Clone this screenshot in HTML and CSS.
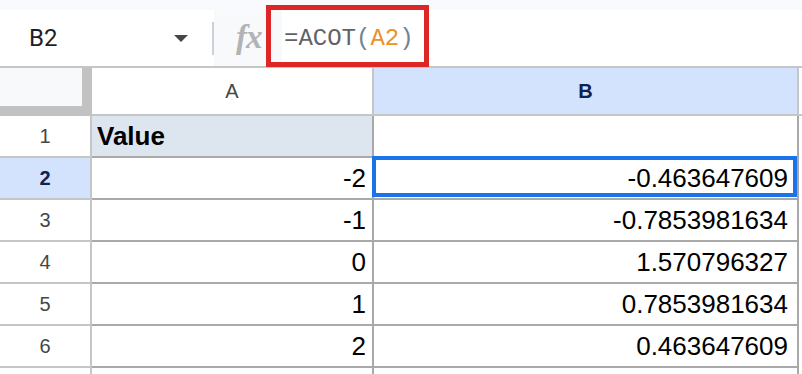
FILE: index.html
```html
<!DOCTYPE html>
<html>
<head>
<meta charset="utf-8">
<link rel="stylesheet" href="styles.css">
</head>
<body>
<div class="page">
  <div class="top-strip"></div>
  <div class="toolbar">
    <div class="namebox">
      <span class="namebox-text">B2</span>
      <span class="caret"></span>
    </div>
    <div class="sep"></div>
    <div class="fx-area"><span class="fx">fx</span></div>
    <div class="formula"><span class="f-fn">=ACOT</span><span class="f-par">(</span><span class="f-ref">A2</span><span class="f-par">)</span></div>
  </div>
  <div class="highlight"></div>
  <div class="grid">
    <div class="corner"><div class="corner-inner"></div></div>
    <div class="colhead">A</div>
    <div class="colhead sel">B</div>
    <div class="colhead rest"></div>

    <div class="rowhead">1</div>
    <div class="cell a head">Value</div>
    <div class="cell b"></div>
    <div class="rest-cell"></div>

    <div class="rowhead sel">2</div>
    <div class="cell a">-2</div>
    <div class="cell b active">-0.463647609</div>
    <div class="rest-cell"></div>

    <div class="rowhead">3</div>
    <div class="cell a">-1</div>
    <div class="cell b">-0.7853981634</div>
    <div class="rest-cell"></div>

    <div class="rowhead">4</div>
    <div class="cell a">0</div>
    <div class="cell b">1.570796327</div>
    <div class="rest-cell"></div>

    <div class="rowhead">5</div>
    <div class="cell a">1</div>
    <div class="cell b">0.7853981634</div>
    <div class="rest-cell"></div>

    <div class="rowhead">6</div>
    <div class="cell a">2</div>
    <div class="cell b">0.463647609</div>
    <div class="rest-cell"></div>

    <div class="rowhead last"></div>
    <div class="cell a last"></div>
    <div class="cell b last"></div>
    <div class="rest-cell"></div>
  </div>
</div>
</body>
</html>
```

FILE: styles.css
```css
* { box-sizing: border-box; }
html, body { margin: 0; padding: 0; background: #ffffff; }
body { width: 802px; height: 374px; overflow: hidden; font-family: "Liberation Sans", Arial, sans-serif; }
.page { position: relative; width: 802px; height: 374px; overflow: hidden; }

.top-strip { height: 10px; background: #f8fafd; }

.toolbar { display: flex; height: 56px; align-items: stretch; background: #ffffff; }
.namebox { width: 212px; display: flex; align-items: center; padding-left: 29px; position: relative; }
.namebox-text { font-family: Roboto, "Liberation Sans", sans-serif; font-size: 24px; color: #1f1f1f; flex: 1; }
.caret { width: 0; height: 0; border-left: 7px solid transparent; border-right: 7px solid transparent; border-top: 7px solid #444746; margin-right: 24px; margin-top: 1px; }
.sep { width: 2px; height: 33px; align-self: center; background: #c9d3de; }
.fx-area { width: 68px; background: #f8f9fa; display: flex; align-items: center; padding-left: 22px; }
.fx { font-family: "Liberation Serif", serif; font-style: italic; font-weight: bold; font-size: 33px; color: #b1b3b6; letter-spacing: -1px; margin-top: -2px; }
.formula { flex: 1; display: flex; align-items: center; padding-left: 2px; font-family: "Liberation Mono", monospace; font-size: 24px; }
.f-fn { color: #5f6368; }
.f-par { color: #6f8296; }
.f-ref { color: #e8912d; }

.highlight { position: absolute; left: 266px; top: 5px; width: 163px; height: 62px; border: 5px solid #dd2727; }

.grid { display: grid; grid-template-columns: 92px 282px 425px 1fr; grid-template-rows: 48px repeat(6, 42px) 6px; border-top: 2px solid #c4c7c5; }

.corner { background: #c2c2c2; padding: 0 10px 10px 0; }
.corner-inner { width: 100%; height: 100%; background: #f8f9fa; }

.colhead { display: flex; align-items: center; justify-content: center; font-size: 20px; color: #444746; background: #ffffff; border-right: 2px solid #c4c7c5; border-bottom: 2px solid #c4c7c5; }
.colhead.sel { background: #d3e3fd; color: #0b2454; font-weight: bold; }
.colhead.rest { border-right: none; }

.rowhead { display: flex; align-items: center; justify-content: center; font-size: 20px; color: #444746; background: #ffffff; border-right: 2px solid #c4c7c5; border-bottom: 2px solid #c4c7c5; }
.rowhead.sel { background: #d3e3fd; color: #0b2454; font-weight: bold; }

.cell { display: flex; align-items: center; justify-content: flex-end; font-size: 26px; color: #000000; border-right: 2px solid #a9a9a9; border-bottom: 2px solid #a9a9a9; padding-right: 6px; padding-top: 1px; position: relative; }
.cell.b { padding-right: 9px; }
.cell.head { justify-content: flex-start; padding-left: 5px; font-weight: bold; background: #dde5ef; }
.cell.active::after { content: ""; position: absolute; top: -2px; left: -2px; right: 0; bottom: 1px; border: 4px solid #1a73e8; }
.last { border-bottom: none; }
.rest-cell { background: #ffffff; }
```
